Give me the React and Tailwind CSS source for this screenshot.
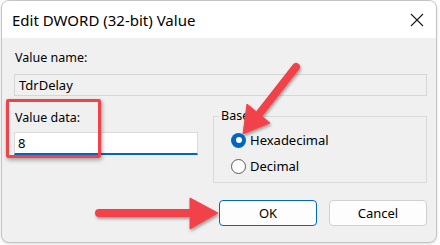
export default function App() {
  return (
    <div className="relative w-[440px] h-[245px] bg-white overflow-hidden font-['Segoe_UI','Noto_Sans',sans-serif] text-black">
      {/* Dialog window */}
      <div className="ml-px w-[436px] h-[243px] rounded-[8px] border border-[#c4c4c4] bg-[#f0f0f0] overflow-hidden flex flex-col shadow-[0_1px_3px_rgba(0,0,0,0.15)]">
        {/* Title bar */}
        <div className="h-[37px] bg-white flex items-center justify-between pl-[10px] pr-[10px] shrink-0">
          <span className="text-[15px] leading-[20px] pt-[1px]">Edit DWORD (32-bit) Value</span>
          <svg width="16" height="16" viewBox="0 0 16 16" className="mr-[1px]">
            <path d="M2 2 L14 14 M14 2 L2 14" stroke="#1a1a1a" strokeWidth="1.1" fill="none" />
          </svg>
        </div>

        {/* Body */}
        <div className="flex-1 px-[12px] pt-[12px] text-[12.5px] leading-[16px]">
          <div className="pl-px">Value name:</div>
          <div className="mt-[8px] h-[22px] border border-[#d6d6d6] bg-[#f0f0f0] flex items-center pl-[4px] text-[13px] mr-[-3px]">
            TdrDelay
          </div>

          <div className="mt-[13px] flex gap-[15px]">
            <div className="w-[184px] pt-[1px]">
              <div className="pl-px">Value data:</div>
              <div className="mt-[6px] h-[23px] bg-white border border-[#dadada] border-b-2 border-b-[#0067c0] flex items-center pl-[3px] text-[13px]">
                8
              </div>
            </div>

            <fieldset className="flex-1 border border-[#dadada] h-[75px] mt-[-1px] mr-[-3px] p-0">
              <legend className="ml-[5px] px-[2px] text-[12.5px] leading-[16px]">Base</legend>
              <div className="flex flex-col gap-[10px] mt-[8px] pl-[17px]">
                <label className="flex items-center gap-[4px] text-[13px]">
                  <span className="w-[15px] h-[15px] rounded-full bg-[#0067c0] flex items-center justify-center">
                    <span className="w-[6px] h-[6px] rounded-full bg-white" />
                  </span>
                  Hexadecimal
                </label>
                <label className="flex items-center gap-[4px] text-[13px]">
                  <span className="w-[15px] h-[15px] rounded-full bg-white border border-[#5a5a5a]" />
                  Decimal
                </label>
              </div>
            </fieldset>
          </div>

          <div className="mt-[17px] flex justify-end gap-[12px] mr-[-3px]">
            <button className="w-[98px] h-[26px] rounded-[4px] bg-[#fdfdfd] border border-[#0067c0] text-[13px]">
              OK
            </button>
            <button className="w-[98px] h-[26px] rounded-[4px] bg-[#fdfdfd] border border-[#d0d0d0] text-[13px]">
              Cancel
            </button>
          </div>
        </div>
      </div>

      {/* Annotation: red box */}
      <div className="absolute left-[6px] top-[99px] w-[95px] h-[59px] border-[3px] border-[#ef4349] rounded-[2px] shadow-[1px_2px_4px_rgba(0,0,0,0.35)]" />

      {/* Annotation: arrows */}
      <svg className="absolute inset-0" width="440" height="245" viewBox="0 0 440 245">
        <defs>
          <filter id="sh" x="-20%" y="-20%" width="140%" height="140%">
            <feDropShadow dx="1" dy="2" stdDeviation="1.5" floodColor="#000" floodOpacity="0.35" />
          </filter>
        </defs>
        <g filter="url(#sh)" fill="#f2434a" stroke="#f2434a">
          <line x1="296" y1="67" x2="260" y2="113" strokeWidth="8" strokeLinecap="round" />
          <polygon points="243,134 247,104 270,123" strokeWidth="1" strokeLinejoin="round" />
          <line x1="99" y1="213" x2="194" y2="213" strokeWidth="8" strokeLinecap="round" />
          <polygon points="218,213 190,198 190,229" strokeWidth="1" strokeLinejoin="round" />
        </g>
      </svg>
    </div>
  );
}
